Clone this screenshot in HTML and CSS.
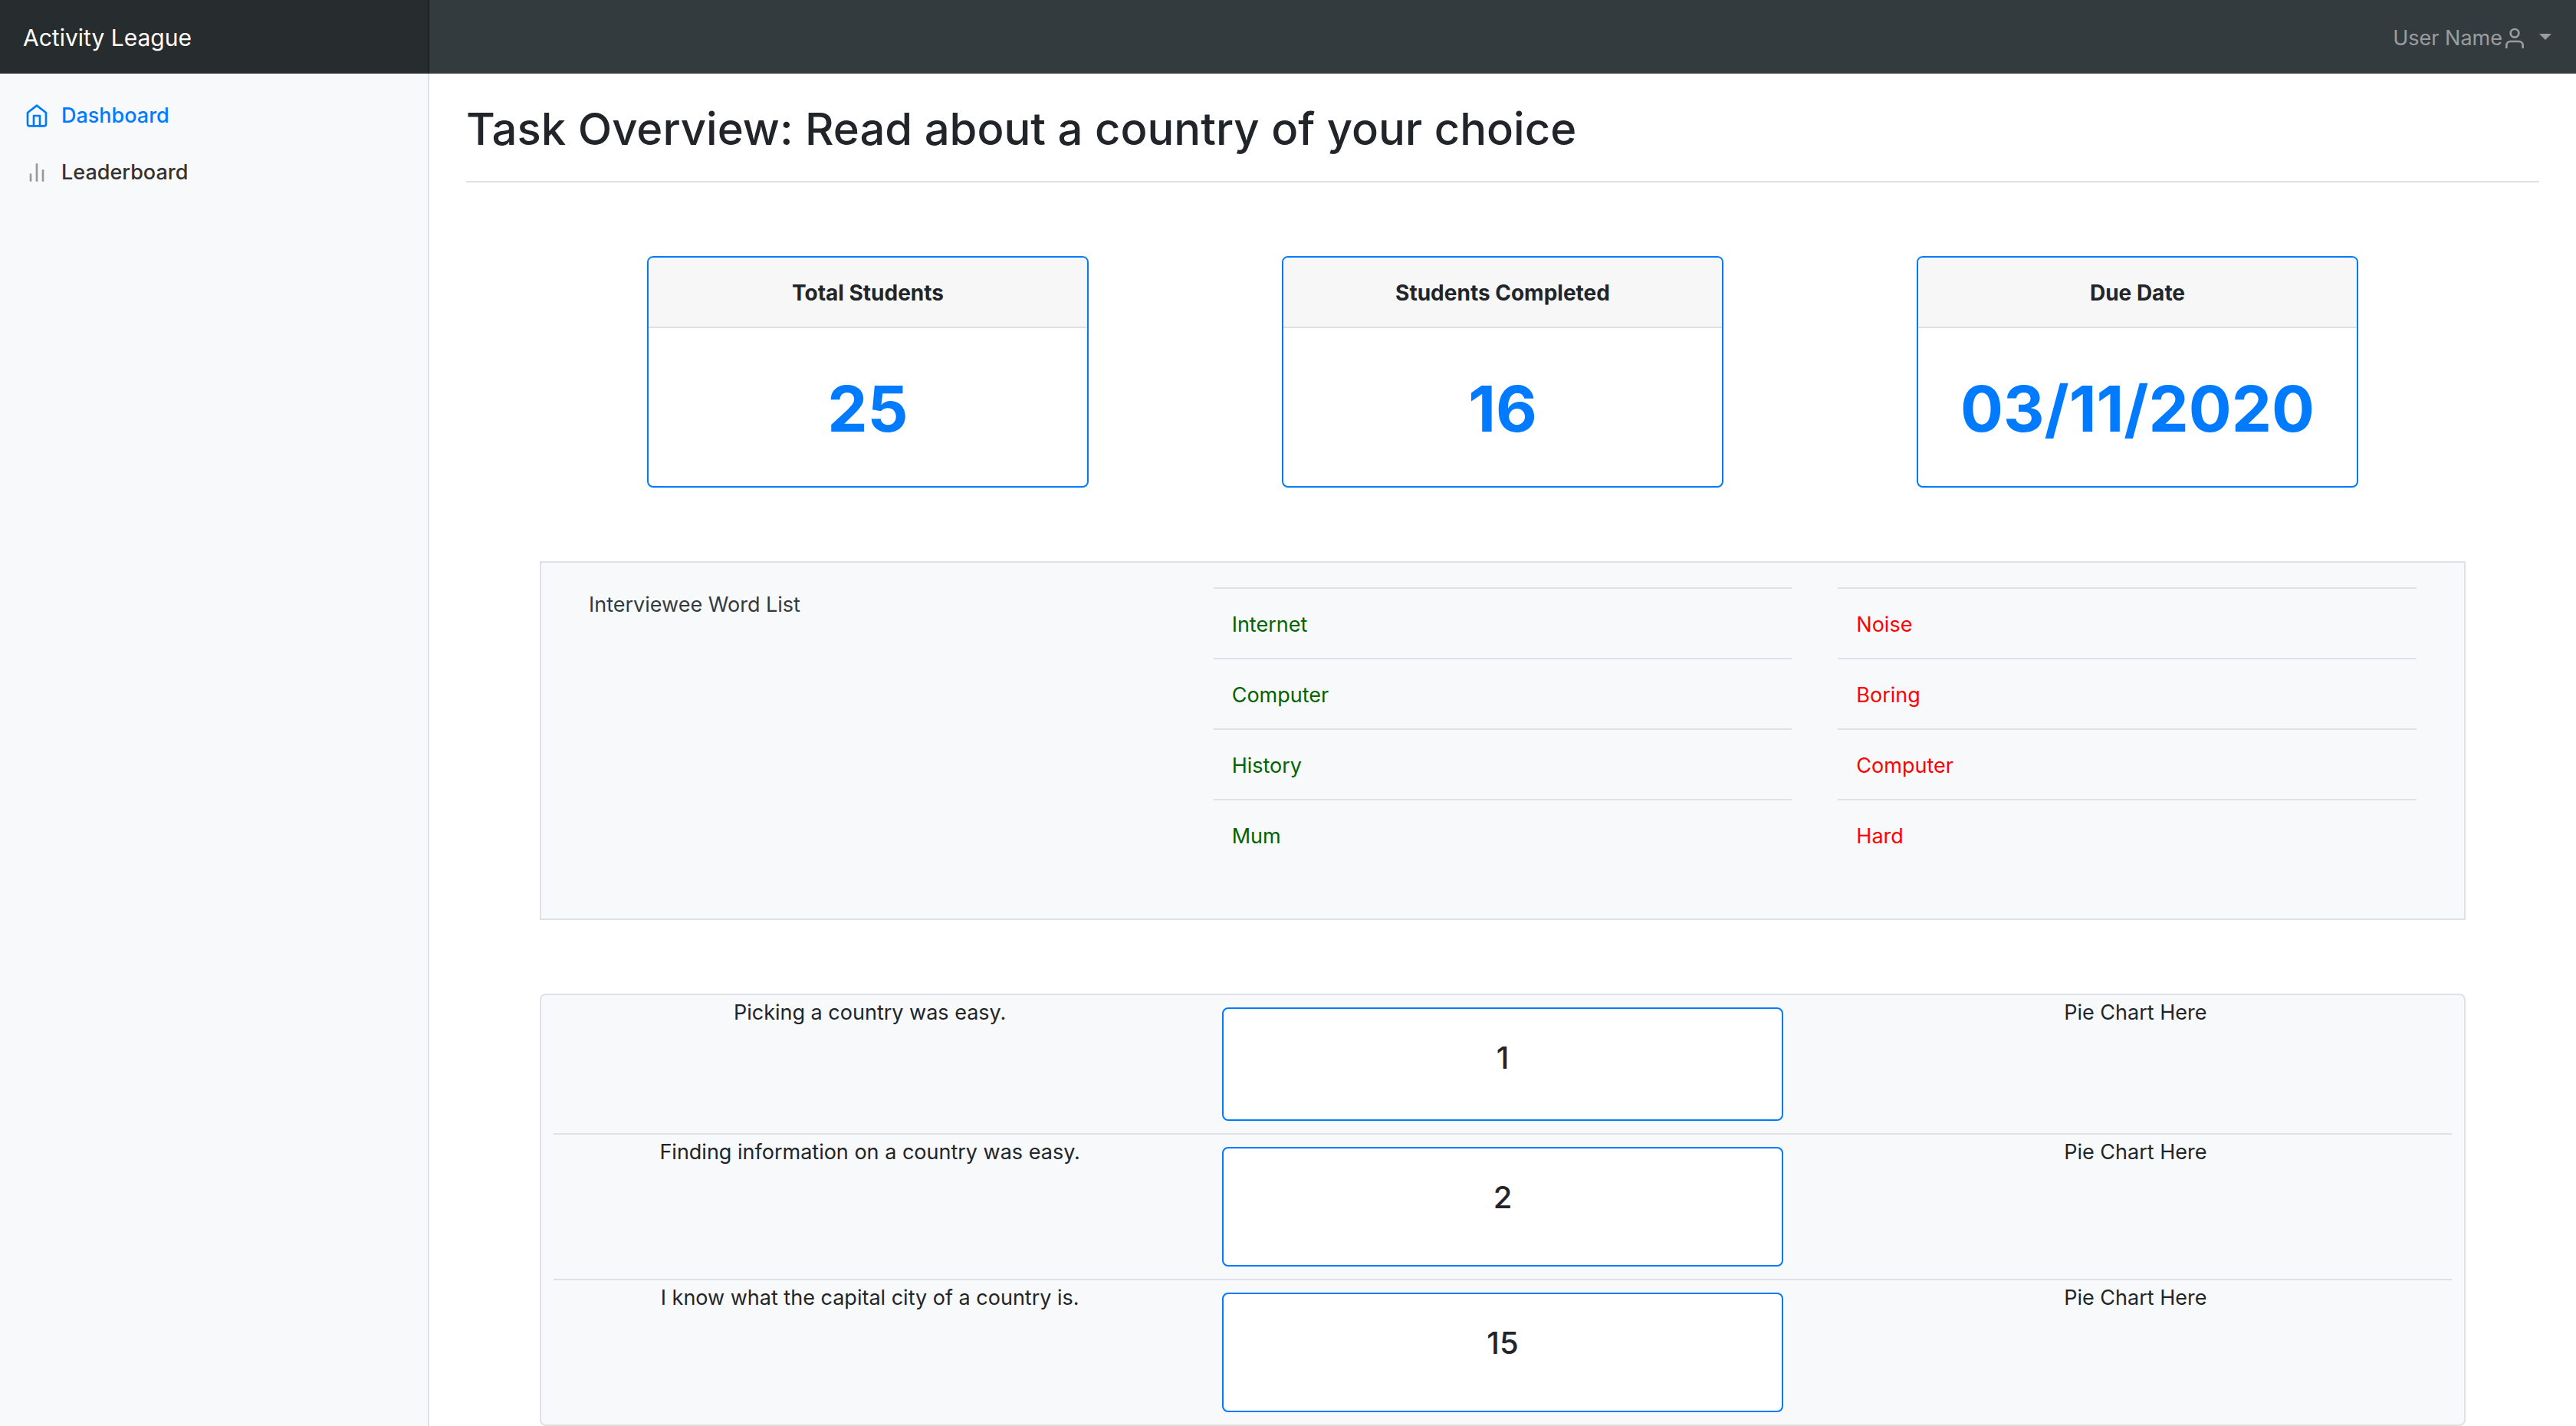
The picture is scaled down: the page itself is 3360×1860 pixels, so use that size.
FILE: index.html
```html
<!DOCTYPE html>
<html lang="en">
<head>
<meta charset="utf-8">
<title>Activity League</title>
<link rel="stylesheet" href="styles.css">
</head>
<body>
<header class="navbar">
  <a class="brand" href="#">Activity League</a>
  <button class="user-menu" type="button">
    <span>User Name</span>
    <svg class="icon" viewBox="0 0 24 24"><path d="M20 21v-2a4 4 0 0 0-4-4H8a4 4 0 0 0-4 4v2"/><circle cx="12" cy="7" r="4"/></svg>
    <span class="caret"></span>
  </button>
</header>
<div class="layout">
  <nav class="sidebar">
    <a class="nav-link active" href="#">
      <svg class="icon" viewBox="0 0 24 24"><path d="M3 9l9-7 9 7v11a2 2 0 0 1-2 2H5a2 2 0 0 1-2-2z"/><polyline points="9 22 9 12 15 12 15 22"/></svg>
      Dashboard
    </a>
    <a class="nav-link" href="#">
      <svg class="icon" viewBox="0 0 24 24"><line x1="18" y1="20" x2="18" y2="10"/><line x1="12" y1="20" x2="12" y2="4"/><line x1="6" y1="20" x2="6" y2="14"/></svg>
      Leaderboard
    </a>
  </nav>
  <main class="main">
    <h1 class="title">Task Overview: Read about a country of your choice</h1>
    <section class="stats">
      <article class="stat"><h2 class="stat-header">Total Students</h2><p class="stat-value">25</p></article>
      <article class="stat"><h2 class="stat-header">Students Completed</h2><p class="stat-value">16</p></article>
      <article class="stat"><h2 class="stat-header">Due Date</h2><p class="stat-value">03/11/2020</p></article>
    </section>
    <section class="words">
      <p class="words-label">Interviewee Word List</p>
      <table class="word-table good">
        <tbody>
          <tr><td>Internet</td></tr>
          <tr><td>Computer</td></tr>
          <tr><td>History</td></tr>
          <tr><td>Mum</td></tr>
        </tbody>
      </table>
      <table class="word-table bad">
        <tbody>
          <tr><td>Noise</td></tr>
          <tr><td>Boring</td></tr>
          <tr><td>Computer</td></tr>
          <tr><td>Hard</td></tr>
        </tbody>
      </table>
    </section>
    <section class="questions">
      <div class="question">
        <p class="question-text">Picking a country was easy.</p>
        <div class="answer">1</div>
        <p class="question-text">Pie Chart Here</p>
      </div>
      <div class="question">
        <p class="question-text">Finding information on a country was easy.</p>
        <div class="answer">2</div>
        <p class="question-text">Pie Chart Here</p>
      </div>
      <div class="question">
        <p class="question-text">I know what the capital city of a country is.</p>
        <div class="answer">15</div>
        <p class="question-text">Pie Chart Here</p>
      </div>
    </section>
  </main>
</div>
</body>
</html>
```
FILE: styles.css
```css
* { box-sizing: border-box; }

body {
  margin: 0;
  font-family: Inter, "Liberation Sans", sans-serif;
  font-size: 27px;
  line-height: 42px;
  color: #212529;
  background: #fff;
}

h1, h2, p { margin: 0; }

.icon {
  width: 32px;
  height: 32px;
  flex: none;
  fill: none;
  stroke: currentColor;
  stroke-width: 2;
  stroke-linecap: round;
  stroke-linejoin: round;
}

.navbar {
  display: flex;
  justify-content: space-between;
  height: 96px;
  background: #343b3e;
}

.brand {
  display: flex;
  align-items: center;
  width: 16.6667%;
  padding: 2px 0 0 30px;
  font-size: 30px;
  color: #fff;
  text-decoration: none;
  background: rgba(0, 0, 0, .25);
  box-shadow: inset -2px 0 0 rgba(0, 0, 0, .25);
}

.user-menu {
  display: flex;
  align-items: center;
  padding: 4px 32px 0 0;
  border: 0;
  background: none;
  font: inherit;
  color: rgba(255, 255, 255, .5);
}

.caret {
  margin: 0 0 4px 16px;
  border: 8px solid transparent;
  border-top-color: currentColor;
  border-bottom: 0;
}

.layout {
  display: flex;
  min-height: calc(100vh - 96px);
}

.sidebar {
  flex: none;
  width: 16.6667%;
  padding-top: 18px;
  background: #f8f9fb;
  border-right: 2px solid #dee2e6;
}

.nav-link {
  display: flex;
  align-items: center;
  gap: 16px;
  padding: 16px 32px;
  font-weight: 500;
  color: #333;
  text-decoration: none;
}

.nav-link .icon { color: #999; }
.nav-link.active, .nav-link.active .icon { color: #007bff; }

.main {
  flex: 1;
  padding: 34px 48px 0;
}

.title {
  padding-bottom: 30px;
  border-bottom: 2px solid #dee2e6;
  font-size: 58px;
  font-weight: 500;
  line-height: 76px;
}

.stats {
  display: grid;
  grid-template-columns: repeat(3, 1fr);
  justify-items: center;
  margin: 96px 96px;
  padding: 0 14px;
}

.stat {
  width: 576px;
  overflow: hidden;
  border: 2px solid #007bff;
  border-radius: 8px;
  text-align: center;
}

.stat-header {
  padding: 25px 24px 23px;
  border-bottom: 2px solid #dfdfdf;
  background: #f7f7f7;
  font-size: 28px;
  font-weight: 700;
  line-height: 42px;
}

.stat-value {
  padding: 42px 0 38px;
  font-size: 83px;
  font-weight: 700;
  line-height: 126px;
  color: #007bff;
}

.words {
  display: grid;
  grid-template-columns: repeat(3, 1fr);
  gap: 60px;
  margin: 0 96px 96px;
  padding: 32px 62px 64px;
  border: 2px solid #dee2e6;
  background: #f8f9fb;
}

.words-label {
  padding-top: 2px;
  color: #343a40;
}

.word-table {
  width: 100%;
  border-collapse: separate;
  border-spacing: 0;
}

.word-table td {
  padding: 26px 24px 22px;
  border-top: 2px solid #dee2e6;
}

.good { color: #006400; }
.bad { color: #f00; }

.questions {
  margin: 0 96px;
  padding: 0 16px;
  border: 2px solid #dee2e6;
  border-radius: 8px;
  background: #f8f9fb;
}

.question {
  display: grid;
  grid-template-columns: repeat(3, 1fr);
  text-align: center;
}

.question + .question { border-top: 2px solid #dee2e6; }

.question-text { padding-top: 2px; }

.answer {
  height: 156px;
  margin: 16px 47px;
  padding: 40px;
  border: 2px solid #007bff;
  border-radius: 8px;
  background: #fff;
  font-size: 40px;
  font-weight: 500;
  line-height: 48px;
}

.question:first-child .answer { height: 148px; }
```
